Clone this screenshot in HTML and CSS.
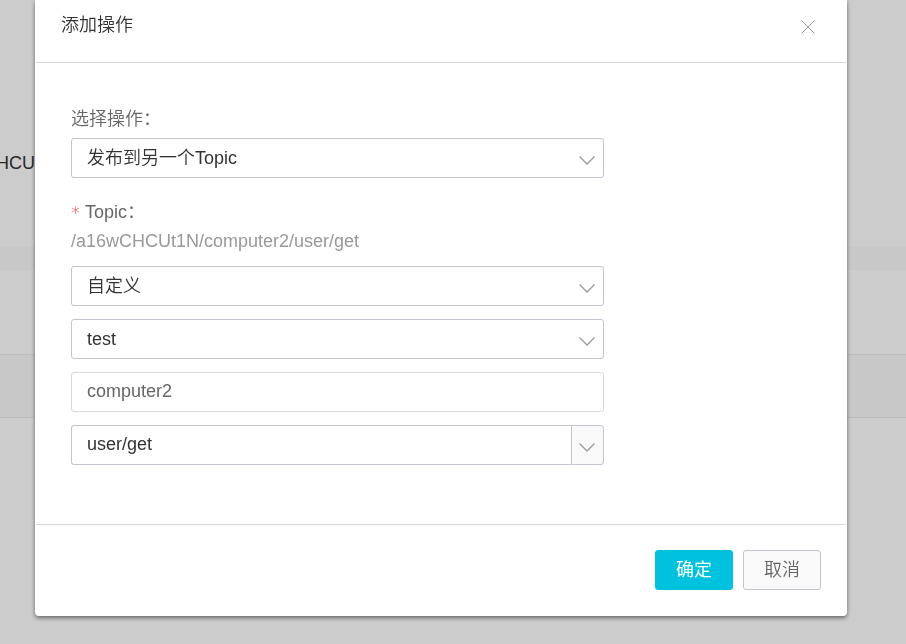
FILE: index.html
```html
<!DOCTYPE html>
<html lang="zh-CN">
<head>
    <meta charset="UTF-8">
    <meta name="viewport" content="width=device-width, initial-scale=1.0">
    <title>添加操作</title>
    <link rel="stylesheet" href="styles.css">
</head>
<body>
    <main class="page">
        <div class="page-topic">HCU</div>
        <div class="page-divider"></div>
        <div class="page-title"></div>
        <div class="page-thead"></div>
    </main>

    <div class="overlay">
        <div class="modal" role="dialog" aria-labelledby="modalTitle">
            <header class="modal-header">
                <h1 id="modalTitle">添加操作</h1>
                <button type="button" class="close" aria-label="关闭">
                    <svg width="14" height="14" viewBox="0 0 14 14"><path d="M0.5 0.5L13.5 13.5M13.5 0.5L0.5 13.5"/></svg>
                </button>
            </header>

            <form class="modal-body">
                <label class="label" for="action">选择操作：</label>
                <div class="field">
                    <select id="action" class="control">
                        <option>发布到另一个Topic</option>
                    </select>
                    <svg class="arrow" width="16" height="9" viewBox="0 0 16 9"><path d="M0.5 0.5L8 8L15.5 0.5"/></svg>
                </div>

                <label class="label topic-label" for="topicType"><span class="required">*</span>Topic：</label>
                <p class="topic-path">/a16wCHCUt1N/computer2/user/get</p>
                <div class="field-list">
                    <div class="field">
                        <select id="topicType" class="control">
                            <option>自定义</option>
                        </select>
                        <svg class="arrow" width="16" height="9" viewBox="0 0 16 9"><path d="M0.5 0.5L8 8L15.5 0.5"/></svg>
                    </div>
                    <div class="field">
                        <select class="control" aria-label="产品">
                            <option>test</option>
                        </select>
                        <svg class="arrow" width="16" height="9" viewBox="0 0 16 9"><path d="M0.5 0.5L8 8L15.5 0.5"/></svg>
                    </div>
                    <div class="field">
                        <input type="text" class="control plain" value="computer2" aria-label="设备">
                    </div>
                    <div class="field combo">
                        <input type="text" class="control" value="user/get" aria-label="Topic">
                        <button type="button" class="combo-btn" aria-label="展开"></button>
                        <svg class="arrow" width="16" height="9" viewBox="0 0 16 9"><path d="M0.5 0.5L8 8L15.5 0.5"/></svg>
                    </div>
                </div>
            </form>

            <footer class="modal-footer">
                <button type="button" class="btn btn-primary">确定</button>
                <button type="button" class="btn">取消</button>
            </footer>
        </div>
    </div>
</body>
</html>
```
FILE: styles.css
```css
* {
    box-sizing: border-box;
}

body {
    margin: 0;
    font-family: "Liberation Sans", "Noto Sans CJK SC", sans-serif;
    font-size: 18px;
    line-height: 26px;
    color: #333;
    background-color: #fff;
}

/* Page behind the dialog */
.page-topic {
    height: 246px;
    margin-left: -4px;
    padding-top: 150px;
}

.page-divider {
    height: 24px;
    background-color: #fafafa;
}

.page-title {
    height: 84px;
}

.page-thead {
    height: 64px;
    background-color: #fafafa;
    border-top: 1px solid #ebebeb;
    border-bottom: 1px solid #ebebeb;
}

.overlay {
    position: fixed;
    inset: 0;
    padding: 0 59px 0 35px;
    background-color: rgba(0, 0, 0, 0.2);
}

/* Dialog */
.modal {
    padding: 0 1px;
    background-color: #fff;
    border-radius: 0 0 4px 4px;
    box-shadow: 0 2px 4px rgba(0, 0, 0, 0.5);
}

.modal-header {
    display: flex;
    justify-content: space-between;
    align-items: flex-start;
    height: 63px;
    padding: 12px 25px;
    border-bottom: 1px solid #d7d8d9;
}

h1 {
    margin: 0;
    font-size: 18px;
    font-weight: 350;
}

.close {
    display: flex;
    padding: 8px 6px;
    border: none;
    background: none;
    cursor: pointer;
}

.close svg,
.arrow {
    fill: none;
    stroke: #999;
}

.modal-body {
    padding: 43px 35px 59px;
}

.label {
    display: block;
    margin-bottom: 6px;
    color: #666;
    font-weight: 350;
}

.topic-label {
    margin: 21px 0 0;
}

.required {
    margin-right: 5px;
    color: #f00;
    font-family: "DejaVu Sans", sans-serif;
    line-height: 1;
    vertical-align: middle;
}

.topic-path {
    margin: 3px 0 12px;
    color: #999;
}

.field-list {
    display: grid;
    gap: 13px;
}

.field {
    position: relative;
    display: flex;
    max-width: 533px;
}

.control {
    flex: 1;
    min-width: 0;
    height: 40px;
    padding: 0 15px 1px;
    border: 1px solid #c3c5cf;
    border-radius: 3px;
    background-color: #fff;
    color: #333;
    font-family: inherit;
    font-size: 18px;
    font-weight: 350;
    appearance: none;
    outline: none;
}

.plain {
    border-color: #d8d9de;
    color: #666;
}

.arrow {
    position: absolute;
    top: 18px;
    right: 9px;
    stroke-width: 1.3;
    pointer-events: none;
}

.combo .control {
    border-right: none;
    border-radius: 3px 0 0 3px;
}

.combo-btn {
    width: 33px;
    border: 1px solid #c3c5cf;
    border-radius: 0 3px 3px 0;
    background-color: #f9f9f9;
}

.modal-footer {
    display: flex;
    justify-content: flex-end;
    gap: 10px;
    padding: 25px 25px 26px;
    border-top: 1px solid #d7d8d9;
}

.btn {
    height: 40px;
    padding: 0 20px 4px;
    border: 1px solid #c3c5cf;
    border-radius: 3px;
    background-color: #f9f9f9;
    color: #666;
    font-family: inherit;
    font-size: 18px;
    font-weight: 350;
    cursor: pointer;
}

.btn-primary {
    border-color: #00c1de;
    background-color: #00c1de;
    color: #fff;
    font-weight: 400;
}
```
